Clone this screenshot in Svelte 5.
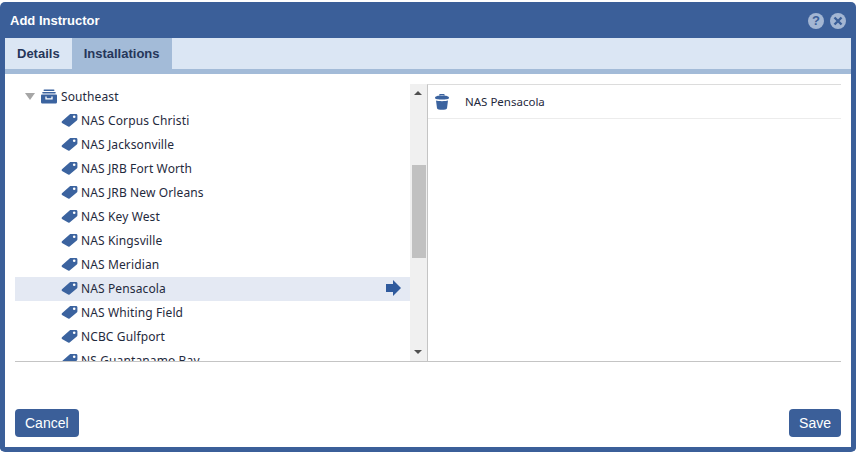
<script>
	let activeTab = $state("Installations");
	const tabs = ["Details", "Installations"];
	const installations = [
		"NAS Corpus Christi",
		"NAS Jacksonville",
		"NAS JRB Fort Worth",
		"NAS JRB New Orleans",
		"NAS Key West",
		"NAS Kingsville",
		"NAS Meridian",
		"NAS Pensacola",
		"NAS Whiting Field",
		"NCBC Gulfport",
		"NS Guantanamo Bay",
	];
	const selected = "NAS Pensacola";
</script>

{#snippet tag()}
	<svg class="tag" width="17" height="14" viewBox="0 0 17 14">
		<path d="M1 8.2 8.6 1.4C9 1 9.5 .9 10 .9H15C15.8 .9 16.4 1.5 16.4 2.3V6.2C16.4 6.8 16.2 7.2 15.8 7.6L8.6 13.4C8 13.9 7.2 13.8 6.7 13.3L1 9.9C.5 9.4 .5 8.7 1 8.2Z" fill="#3b639f" />
		<circle cx="13.2" cy="3.8" r="1.3" fill="#fff" />
	</svg>
{/snippet}

<div class="dialog">
	<header class="title">
		<span>Add Instructor</span>
		<div class="title-icons">
			<span class="round">?</span>
			<span class="round">
				<svg width="10" height="10" viewBox="0 0 10 10">
					<path d="M1.5 1.5 8.5 8.5M8.5 1.5 1.5 8.5" stroke="#3b5f99" stroke-width="2.4" />
				</svg>
			</span>
		</div>
	</header>

	<nav class="tabs">
		{#each tabs as t}
			<button class="tab" class:active={activeTab === t} onclick={() => (activeTab = t)}>{t}</button>
		{/each}
	</nav>

	<div class="body">
		<div class="panes">
			<div class="left">
				<div class="tree">
					<div class="row root">
						<span class="caret"></span>
						<svg class="box" width="16" height="15" viewBox="0 0 16 15">
							<rect x="2.5" y="0.5" width="11" height="1.6" rx=".8" fill="#3b639f" />
							<rect x="1.2" y="3" width="13.6" height="1.6" rx=".8" fill="#3b639f" />
							<path d="M0 6.5C0 5.9.5 5.4 1 5.4H15C15.5 5.4 16 5.9 16 6.5V13C16 14 15.2 14.6 14.4 14.6H1.6C.8 14.6 0 14 0 13Z" fill="#3b639f" />
							<path d="M5 7.6V9.8H11V7.6" fill="none" stroke="#fff" stroke-width="1.3" />
						</svg>
						<span>Southeast</span>
					</div>
					{#each installations as name}
						<div class="row leaf" class:selected={name === selected}>
							{@render tag()}
							<span>{name}</span>
							{#if name === selected}
								<svg class="arrow" width="15" height="16" viewBox="0 0 15 16">
									<path d="M0 4H7V0L15 8 7 16V12H0Z" fill="#2f5a9d" />
								</svg>
							{/if}
						</div>
					{/each}
				</div>
				<div class="scrollbar">
					<span class="sb-up"></span>
					<div class="thumb"></div>
					<span class="sb-down"></span>
				</div>
			</div>
			<div class="right">
				<div class="picked">
					<svg width="14" height="16" viewBox="0 0 14 16">
						<path d="M4.6 1.6C4.6.7 5.4.3 7 .3S9.4.7 9.4 1.6" fill="none" stroke="#3b639f" stroke-width="1.2" />
						<path d="M0 4C0 2.4 3 1.6 7 1.6S14 2.4 14 4C14 5 11 5.6 7 5.6S0 5 0 4Z" fill="#3b639f" />
						<path d="M1 6.6C3 7.4 11 7.4 13 6.6L12 14.2C11.8 15.4 9.5 15.8 7 15.8S2.2 15.4 2 14.2Z" fill="#3b639f" />
					</svg>
					<span>{selected}</span>
				</div>
			</div>
		</div>
		<footer class="actions">
			<button class="btn">Cancel</button>
			<button class="btn">Save</button>
		</footer>
	</div>
</div>

<style>
	:global(body) {
		background: #fff;
	}

	.dialog {
		width: 856px;
		height: 450px;
		margin-top: 2px;
		box-sizing: border-box;
		border: 5px solid #3b5f99;
		border-top: 0;
		border-radius: 5px;
		background: #fff;
		display: flex;
		flex-direction: column;
		font-family: "Liberation Sans", Arial, sans-serif;
		overflow: hidden;
	}

	.title {
		height: 36px;
		flex-shrink: 0;
		margin: 0 -5px;
		padding: 0 10px;
		background: #3b5f99;
		color: #fff;
		font-size: 13px;
		font-weight: 700;
		display: flex;
		align-items: center;
		justify-content: space-between;
	}

	.title-icons {
		display: flex;
		gap: 6px;
		margin-top: 1px;
	}

	.round {
		width: 16px;
		height: 16px;
		border-radius: 50%;
		background: #a3b6d3;
		color: #3b5f99;
		font-size: 13px;
		font-weight: 700;
		display: flex;
		align-items: center;
		justify-content: center;
	}

	.tabs {
		height: 36px;
		flex-shrink: 0;
		box-sizing: border-box;
		background: #dbe6f4;
		border-bottom: 5px solid #a3bbd8;
		display: flex;
	}

	.tab {
		height: 31px;
		padding: 0 12px;
		border: 0;
		background: transparent;
		color: #26365a;
		font: 700 13px "Liberation Sans", Arial, sans-serif;
		cursor: pointer;
	}

	.tab.active {
		background: #a3bbd8;
	}

	.body {
		flex: 1;
		min-height: 0;
		padding: 10px;
		display: flex;
		flex-direction: column;
	}

	.panes {
		height: 277px;
		flex-shrink: 0;
		display: flex;
		border-bottom: 1px solid #c4c4c4;
	}

	.left {
		width: 412px;
		flex-shrink: 0;
		display: flex;
	}

	.tree {
		flex: 1;
		overflow: hidden;
		padding-top: 1px;
	}

	.row {
		height: 24px;
		box-sizing: border-box;
		padding-bottom: 2px;
		display: flex;
		align-items: center;
		font-family: "Noto Sans", Tahoma, sans-serif;
		font-size: 12px;
		letter-spacing: 0.12px;
		color: #1f2a3d;
		white-space: nowrap;
	}

	.root {
		padding-left: 10px;
	}

	.caret {
		width: 0;
		height: 0;
		border-left: 5px solid transparent;
		border-right: 5px solid transparent;
		border-top: 7px solid #a6a6a6;
		margin-right: 6px;
	}

	.box {
		margin-right: 4px;
	}

	.leaf {
		padding-left: 46px;
	}

	.tag {
		margin-right: 3px;
	}

	.selected {
		background: #e4e9f3;
	}

	.arrow {
		margin-left: auto;
		margin-right: 9px;
	}

	.scrollbar {
		width: 17px;
		flex-shrink: 0;
		background: #f0f0f0;
		position: relative;
	}

	.thumb {
		position: absolute;
		top: 81px;
		left: 2px;
		right: 1px;
		height: 93px;
		background: #c1c1c1;
	}

	.sb-up,
	.sb-down {
		position: absolute;
		left: 4px;
		width: 0;
		height: 0;
		border-left: 4px solid transparent;
		border-right: 4px solid transparent;
	}

	.sb-up {
		top: 7px;
		border-bottom: 4px solid #505050;
	}

	.sb-down {
		bottom: 7px;
		border-top: 4px solid #505050;
	}

	.right {
		flex: 1;
		border-left: 1px solid #c4c4c4;
		border-top: 1px solid #dcdcdc;
	}

	.picked {
		height: 34px;
		box-sizing: border-box;
		padding-left: 7px;
		display: flex;
		align-items: center;
		gap: 16px;
		border-bottom: 1px solid #ececec;
		font-family: "Noto Sans", Tahoma, sans-serif;
		font-size: 11.5px;
		color: #1f2a3d;
	}

	.actions {
		margin-top: auto;
		display: flex;
		justify-content: space-between;
	}

	.btn {
		height: 28px;
		padding: 0 10px;
		border: 0;
		border-radius: 4px;
		background: #3b5f99;
		color: #fff;
		font: 14px "Liberation Sans", Arial, sans-serif;
		cursor: pointer;
	}
</style>
